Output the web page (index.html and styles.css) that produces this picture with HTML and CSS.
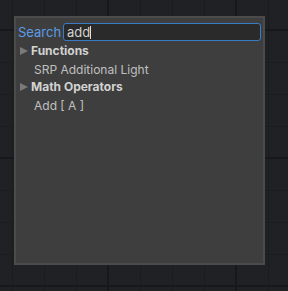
FILE: index.html
```html
<!DOCTYPE html>
<html lang="en">
<head>
  <meta charset="UTF-8" />
  <title>Create Node</title>
  <link rel="stylesheet" href="styles.css">
</head>
<body>
  <div class="canvas">
    <div class="searcher">
      <div class="search-row">
        <label class="search-label">Search</label>
        <div class="search-field">add<span class="caret"></span></div>
      </div>

      <ul class="tree">
        <li class="group"><span class="arrow"></span>Functions</li>
        <li class="entry">SRP Additional Light</li>
        <li class="group"><span class="arrow"></span>Math Operators</li>
        <li class="entry">Add [ A ]</li>
      </ul>
    </div>
  </div>
</body>
</html>
```

FILE: styles.css
```css
html, body {
  margin: 0;
  padding: 0;
}

body {
  font-family: Inter, "Noto Sans", sans-serif;
  font-size: 12px;
  background-color: #202125;
}

.canvas {
  width: 288px;
  height: 291px;
  padding: 16px 0 0 14px;
  box-sizing: border-box;
  background-color: #202125;
  background-image:
    linear-gradient(to right, #18181a 2px, transparent 2px),
    linear-gradient(to bottom, #18181a 2px, transparent 2px),
    linear-gradient(to right, #1b1c1e 1px, transparent 1px),
    linear-gradient(to bottom, #1b1c1e 1px, transparent 1px);
  background-size: 128px 128px, 128px 128px, 32px 32px, 32px 32px;
  background-position: 107px 0, 0 29px, 12px 0, 0 30px;
}

.searcher {
  width: 251px;
  height: 249px;
  box-sizing: border-box;
  background-color: rgba(64, 64, 64, 0.96);
  border: 2px solid rgba(76, 76, 76, 0.9);
  padding: 5px 2px 0 2px;
}

.search-row {
  display: flex;
  align-items: center;
  height: 18px;
}

.search-label {
  color: #5c9ce6;
  font-size: 13px;
  width: 45px;
}

.search-field {
  flex: 1;
  height: 18px;
  box-sizing: border-box;
  border: 1px solid #3a7bc8;
  border-radius: 3px;
  background-color: #2a2a2a;
  color: #d2d2d2;
  font-size: 13px;
  line-height: 16px;
  padding-left: 3px;
  display: flex;
  align-items: center;
}

.caret {
  display: inline-block;
  width: 1px;
  height: 13px;
  background-color: #e0e0e0;
}

.tree {
  list-style: none;
  margin: 1px 0 0 0;
  padding: 0;
}

.tree li {
  display: flex;
  align-items: center;
}

.group {
  height: 17px;
  color: #d2d2d2;
  font-weight: bold;
  font-size: 12px;
  padding-left: 2px;
}

.arrow {
  width: 0;
  height: 0;
  border-top: 4.5px solid transparent;
  border-bottom: 4.5px solid transparent;
  border-left: 8px solid #7a7a7a;
  margin-right: 3px;
}

.entry {
  height: 17px;
  padding-top: 2px;
  color: #c0c0c0;
  padding-left: 16px;
}
```
